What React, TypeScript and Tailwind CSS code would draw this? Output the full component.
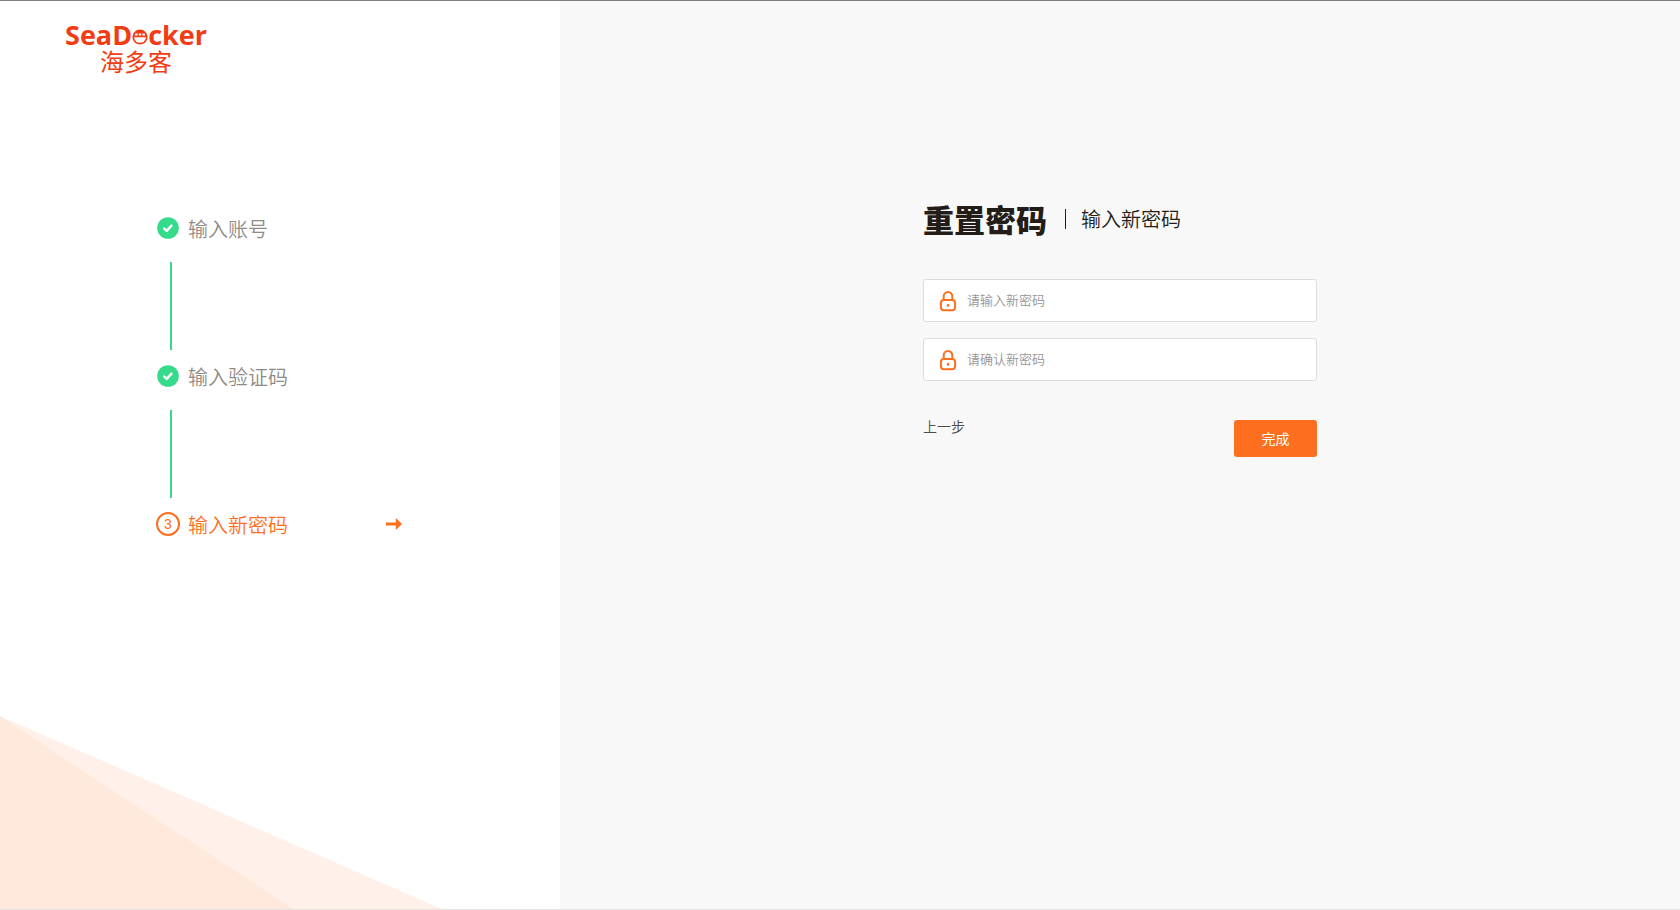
import { useState } from "react";

const steps = [
  { title: "输入账号", done: true },
  { title: "输入验证码", done: true },
  { title: "输入新密码", done: false },
];

const fields = [
  { id: "password", placeholder: "请输入新密码" },
  { id: "confirm", placeholder: "请确认新密码" },
];

function Logo() {
  return (
    <div className="flex w-[142px] flex-col items-center text-[#f23c13]">
      <div className="flex items-baseline font-['Open_Sans','Noto_Sans',sans-serif] text-[27px] leading-7 font-bold">
        <span>SeaD</span>
        <svg viewBox="0 0 16 16" className="size-4 shrink-0" aria-label="o" role="img">
          <circle cx="8" cy="8" r="7.6" fill="currentColor" />
          <path d="M3.4 4.6 H5.6 V6.6 H2.6 Z M6.8 4.6 H9.2 V6.6 H6.8 Z M10.4 4.6 H12.6 L13.4 6.6 H10.4 Z" fill="#fff" />
          <path d="M2.1 8.2 H13.9 A5.9 5.6 0 0 1 2.1 8.2 Z" fill="#fff" />
        </svg>
        <span>cker</span>
      </div>
      <div className="text-[24px] leading-6 font-normal">海多客</div>
    </div>
  );
}

function LockIcon() {
  return (
    <svg viewBox="0 0 18 22" className="h-[22px] w-[18px] shrink-0" fill="none" aria-hidden="true">
      <rect x="1.9" y="10.1" width="14.2" height="10.2" rx="3" stroke="#fd6f1f" strokeWidth="2" />
      <path d="M4.7 10.1 V6.3 a4.3 4.3 0 0 1 8.6 0 V10.1" stroke="#fd6f1f" strokeWidth="2" />
      <circle cx="9" cy="15.4" r="1.3" fill="#fd6f1f" />
    </svg>
  );
}

function StepIcon({ index, done }: { index: number; done: boolean }) {
  if (done) {
    return (
      <svg viewBox="0 0 22 22" className="size-[22px]" aria-hidden="true">
        <circle cx="11" cy="11" r="10.8" fill="#35da8b" />
        <path
          d="M7.2 11.5 L9.7 13.9 L14.5 8.6"
          fill="none"
          stroke="#fff"
          strokeWidth="2.4"
          strokeLinecap="round"
          strokeLinejoin="round"
        />
      </svg>
    );
  }
  return (
    <span className="flex size-6 items-center justify-center rounded-full border-2 border-[#fd6f1f] font-['Liberation_Sans',sans-serif] text-sm leading-5">
      {index}
    </span>
  );
}

export default function App() {
  const [values, setValues] = useState<Record<string, string>>({});

  return (
    <div className="flex min-h-screen border-t border-b border-t-[#7f7f7f] border-b-[#e4e4e4] bg-[#f8f8f8] font-['Noto_Sans_CJK_SC',sans-serif] font-[350] text-[#231c17]">
      {/* Steps */}
      <aside className="relative w-1/3 bg-white px-[65px] pt-5">
        <svg
          viewBox="0 0 442 193"
          className="absolute bottom-0 left-0 w-[79%]"
          aria-hidden="true"
        >
          <path d="M0 0 L442 193 H0 Z" fill="#fff1e9" />
          <path d="M0 0 L293 193 H0 Z" fill="#ffe9dc" />
        </svg>
        <Logo />
        <ol className="mt-[141px] ml-[91px] w-[246px]">
          {steps.map((step, i) => (
            <li key={step.title} className={step.done ? "text-[#8f8b88]" : "text-[#fd6f1f]"}>
              <div className="flex h-7 items-center">
                <div className="flex w-6 shrink-0 justify-center">
                  <StepIcon index={i + 1} done={step.done} />
                </div>
                <span className="ml-2 pt-0.5 text-xl leading-7">{step.title}</span>
                {!step.done && (
                  <svg viewBox="0 0 16 12" className="ml-auto h-3 w-4" aria-hidden="true">
                    <path d="M0 4.6 H9.8 V0 L16 6 L9.8 12 V7.4 H0 Z" fill="#fd6f1f" />
                  </svg>
                )}
              </div>
              {i < steps.length - 1 && (
                <div className="mt-5 mb-3 ml-[14px] h-[88px] w-0.5 bg-[#35da8b]" />
              )}
            </li>
          ))}
        </ol>
      </aside>

      {/* Form */}
      <main className="flex-1 pt-[194px]">
        <form className="mx-auto w-[394px]" onSubmit={(e) => e.preventDefault()}>
          <div className="flex h-12 items-center">
            <h1 className="text-[31px] leading-[48px] font-black">重置密码</h1>
            <div className="mr-[15px] ml-[18px] h-5 w-px bg-[#231c17]" />
            <h2 className="text-xl leading-7">输入新密码</h2>
          </div>
          <div className="mt-9 space-y-4">
            {fields.map((field) => (
              <label
                key={field.id}
                htmlFor={field.id}
                className="flex h-[43px] items-center gap-2.5 rounded-[3px] border border-[#dcdcdc] bg-white px-[15px]"
              >
                <LockIcon />
                <input
                  id={field.id}
                  name={field.id}
                  type="password"
                  aria-label={field.placeholder}
                  placeholder={field.placeholder}
                  value={values[field.id] ?? ""}
                  onChange={(e) => setValues({ ...values, [field.id]: e.target.value })}
                  className="min-w-0 flex-1 pb-0.5 text-[13px] leading-5 placeholder-[#989492] outline-none"
                />
              </label>
            ))}
          </div>
          <div className="mt-[39px] flex items-start justify-between">
            <a href="#" className="text-sm leading-3 text-[#504b47]">
              上一步
            </a>
            <button
              type="submit"
              className="h-[37px] w-[83px] rounded-[3px] bg-[#fd6f1f] pb-0.5 text-sm leading-5 font-normal text-white"
            >
              完成
            </button>
          </div>
        </form>
      </main>
    </div>
  );
}
